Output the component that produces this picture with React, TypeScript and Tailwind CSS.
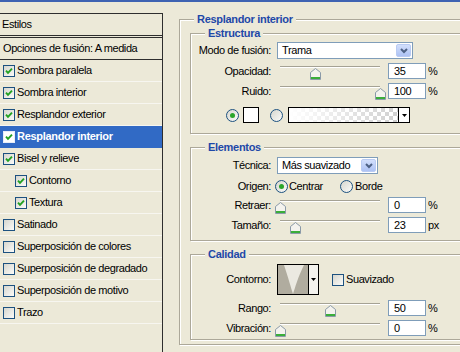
import React from "react";

const Check = ({ on, sel }: { on?: boolean; sel?: boolean }) => (
  <span
    className={`flex h-[12px] w-[12px] shrink-0 items-center justify-center border ${
      sel ? "border-[#e8eef8] bg-white" : "border-[#1c5180] bg-[linear-gradient(135deg,#d6d6ce,#fbfbf9)]"
    }`}
  >
    {on && (
      <svg width="8" height="8" viewBox="0 0 8 8">
        <path d="M1 3.6 3 5.8 7 1.6" stroke="#21a121" strokeWidth="1.9" fill="none" />
      </svg>
    )}
  </span>
);

const Radio = ({ on }: { on?: boolean }) => (
  <span className="flex h-[13px] w-[13px] shrink-0 items-center justify-center rounded-full border border-[#1c5180] bg-[linear-gradient(135deg,#d6d6ce,#fbfbf9)]">
    {on && <span className="h-[5px] w-[5px] rounded-full bg-[#2aa52a]" />}
  </span>
);

const Thumb = () => (
  <svg width="11" height="12" viewBox="0 0 11 12">
    <path d="M0.5 4.5 L5.5 0.5 L10.5 4.5 V11.5 H0.5 Z" fill="#f4f3ee" stroke="#8b9aa8" />
    <rect x="1" y="9" width="9" height="2" fill="#3aae3a" />
  </svg>
);

const Slider = ({ v }: { v: number }) => (
  <div className="relative h-[16px] w-[108px] shrink-0">
    <div className="ml-[3px] mt-[6px] h-[2px] w-[100px] border-t border-b border-t-[#a5a294] border-b-white" />
    <div className="absolute top-[2px]" style={{ left: 3 + v - 5 }}>
      <Thumb />
    </div>
  </div>
);

const Input = ({ v }: { v: string }) => (
  <div className="ml-[3px] h-[16px] w-[38px] shrink-0 border border-[#7f9db9] bg-white pl-[5px] leading-[14px]">
    {v}
  </div>
);

const DropBtn = () => (
  <span className="mr-[1px] flex h-[13px] w-[15px] items-center justify-center rounded-[2px] border border-[#b9cbf3] bg-[linear-gradient(#d2dffc,#adc2f4)]">
    <svg width="8" height="6" viewBox="0 0 8 6">
      <path d="M1 1 L4 4 L7 1" stroke="#4d6185" strokeWidth="2" fill="none" />
    </svg>
  </span>
);

const Select = ({ text, w }: { text: string; w: string }) => (
  <div className={`flex h-[17px] items-center border border-[#7f9db9] bg-white pl-[4px] ${w}`}>
    <span className="flex-1 leading-[13px]">{text}</span>
    <DropBtn />
  </div>
);

const Label = ({ t }: { t: string }) => (
  <div className="w-[80px] shrink-0 text-right leading-[13px]">{t}</div>
);

const SliderRow = ({ label, v, val, unit, cls }: { label: string; v: number; val: string; unit: string; cls?: string }) => (
  <div className={`flex h-[16px] items-center ${cls ?? ""}`}>
    <Label t={label} />
    <div className="ml-[6px]">
      <Slider v={v} />
    </div>
    <Input v={val} />
    <span className="ml-[2px] leading-[13px]">{unit}</span>
  </div>
);

const Legend = ({ t, outer }: { t: string; outer?: boolean }) => (
  <legend
    className={`${outer ? "ml-[4px]" : "ml-[14px]"} bg-[#ece9d8] px-[3px] font-bold leading-[13px] tracking-[-0.3px] text-[#1e48a8]`}
  >
    {t}
  </legend>
);

const fs = "border border-[#aca899] shadow-[inset_1px_1px_0_#ffffff,1px_1px_0_#ffffff]";

const rows: { t: string; on?: boolean; sel?: boolean; sub?: boolean }[] = [
  { t: "Sombra paralela", on: true },
  { t: "Sombra interior", on: true },
  { t: "Resplandor exterior", on: true },
  { t: "Resplandor interior", on: true, sel: true },
  { t: "Bisel y relieve", on: true },
  { t: "Contorno", on: true, sub: true },
  { t: "Textura", on: true, sub: true },
  { t: "Satinado" },
  { t: "Superposición de colores" },
  { t: "Superposición de degradado" },
  { t: "Superposición de motivo" },
  { t: "Trazo" },
];

export default function App() {
  return (
    <div className="h-[352px] w-[460px] overflow-hidden bg-[#ece9d8] font-['Liberation_Sans',Arial,sans-serif] text-[11px] tracking-[-0.4px] text-black">
      <div className="h-[2px] bg-[#3f63b2]" />
      <div className="flex items-start">
        {/* Left panel */}
        <div className="mt-[11px] h-[400px] w-[163px] shrink-0 border-t border-r border-[#2e2e2e]">
          <div className="flex h-[22px] items-center border-b border-[#2e2e2e] pl-[2px]">Estilos</div>
          <div className="mt-[1px] flex h-[23px] items-center border-t border-b border-[#2e2e2e] pl-[3px]">
            Opciones de fusión: A medida
          </div>
          {rows.map((r) => (
            <div
              key={r.t}
              className={`flex h-[22px] items-center gap-[2px] border-b ${
                r.sel ? "border-[#316ac5] bg-[#316ac5] font-bold tracking-[-0.3px] text-white" : "border-[#f7f6f0]"
              } ${r.sub ? "pl-[15px]" : "pl-[3px]"}`}
            >
              <Check on={r.on} sel={r.sel} />
              <span className="leading-[13px]">{r.t}</span>
            </div>
          ))}
        </div>

        {/* Right panel */}
        <fieldset className={`ml-[16px] mt-[11px] w-[300px] shrink-0 pl-[10px] pb-[4px] ${fs}`}>
          <Legend t="Resplandor interior" outer />
          <fieldset className={`mt-[1px] w-[280px] pb-[10px] ${fs}`}>
            <Legend t="Estructura" />
            <div className="mt-[2px] flex h-[17px] items-center">
              <Label t="Modo de fusión:" />
              <div className="ml-[6px]">
                <Select text="Trama" w="w-[136px]" />
              </div>
            </div>
            <SliderRow label="Opacidad:" v={35} val="35" unit="%" cls="mt-[4px]" />
            <SliderRow label="Ruido:" v={100} val="100" unit="%" cls="mt-[4px]" />
            <div className="ml-[35px] mt-[8px] flex h-[16px] items-center">
              <Radio on />
              <div className="ml-[4px] h-[16px] w-[16px] border border-black bg-white" />
              <div className="ml-[11px]">
                <Radio />
              </div>
              <div className="ml-[5px] flex h-[16px] w-[122px] border border-black">
                <div className="h-full flex-1 bg-[repeating-conic-gradient(#d0d0d0_0_25%,#ffffff_0_50%)] bg-[length:8px_8px]">
                  <div className="h-full w-full bg-[linear-gradient(to_right,#ffffff,rgba(255,255,255,0))]" />
                </div>
                <div className="flex w-[11px] items-center justify-center border-l border-black bg-white">
                  <svg width="5" height="3" viewBox="0 0 5 3">
                    <path d="M0 0 H5 L2.5 3 Z" fill="#000" />
                  </svg>
                </div>
              </div>
            </div>
          </fieldset>

          <fieldset className={`mt-[7px] w-[280px] pb-[7px] ${fs}`}>
            <Legend t="Elementos" />
            <div className="mt-[3px] flex h-[17px] items-center">
              <Label t="Técnica:" />
              <div className="ml-[6px]">
                <Select text="Más suavizado" w="w-[101px]" />
              </div>
            </div>
            <div className="mt-[6px] flex h-[13px] items-center">
              <Label t="Origen:" />
              <div className="ml-[4px] flex w-[65px] items-center">
                <Radio on />
                <span className="ml-[1px] leading-[13px]">Centrar</span>
              </div>
              <Radio />
              <span className="ml-[2px] leading-[13px]">Borde</span>
            </div>
            <SliderRow label="Retraer:" v={0} val="0" unit="%" cls="mt-[4px]" />
            <SliderRow label="Tamaño:" v={15} val="23" unit="px" cls="mt-[4px]" />
          </fieldset>

          <fieldset className={`mt-[7px] w-[280px] pb-[3px] ${fs}`}>
            <Legend t="Calidad" />
            <div className="mt-[3px] flex h-[31px] items-center">
              <Label t="Contorno:" />
              <div className="ml-[6px] flex h-[31px] w-[42px] border border-black">
                <svg width="30" height="29" viewBox="0 0 30 29" className="block">
                  <rect width="30" height="29" fill="#b0ac9f" />
                  <path d="M6 0 C10 12 13 23 15 29 C17 23 20 12 26 0 Z" fill="#ebe9e1" />
                </svg>
                <div className="flex flex-1 items-center justify-center border-l border-black bg-[#f4f3ee]">
                  <svg width="5" height="3" viewBox="0 0 5 3">
                    <path d="M0 0 H5 L2.5 3 Z" fill="#000" />
                  </svg>
                </div>
              </div>
              <div className="ml-[13px]">
                <Check />
              </div>
              <span className="ml-[2px] leading-[13px]">Suavizado</span>
            </div>
            <SliderRow label="Rango:" v={50} val="50" unit="%" cls="mt-[5px]" />
            <SliderRow label="Vibración:" v={0} val="0" unit="%" cls="mt-[4px]" />
          </fieldset>
        </fieldset>
      </div>
    </div>
  );
}
